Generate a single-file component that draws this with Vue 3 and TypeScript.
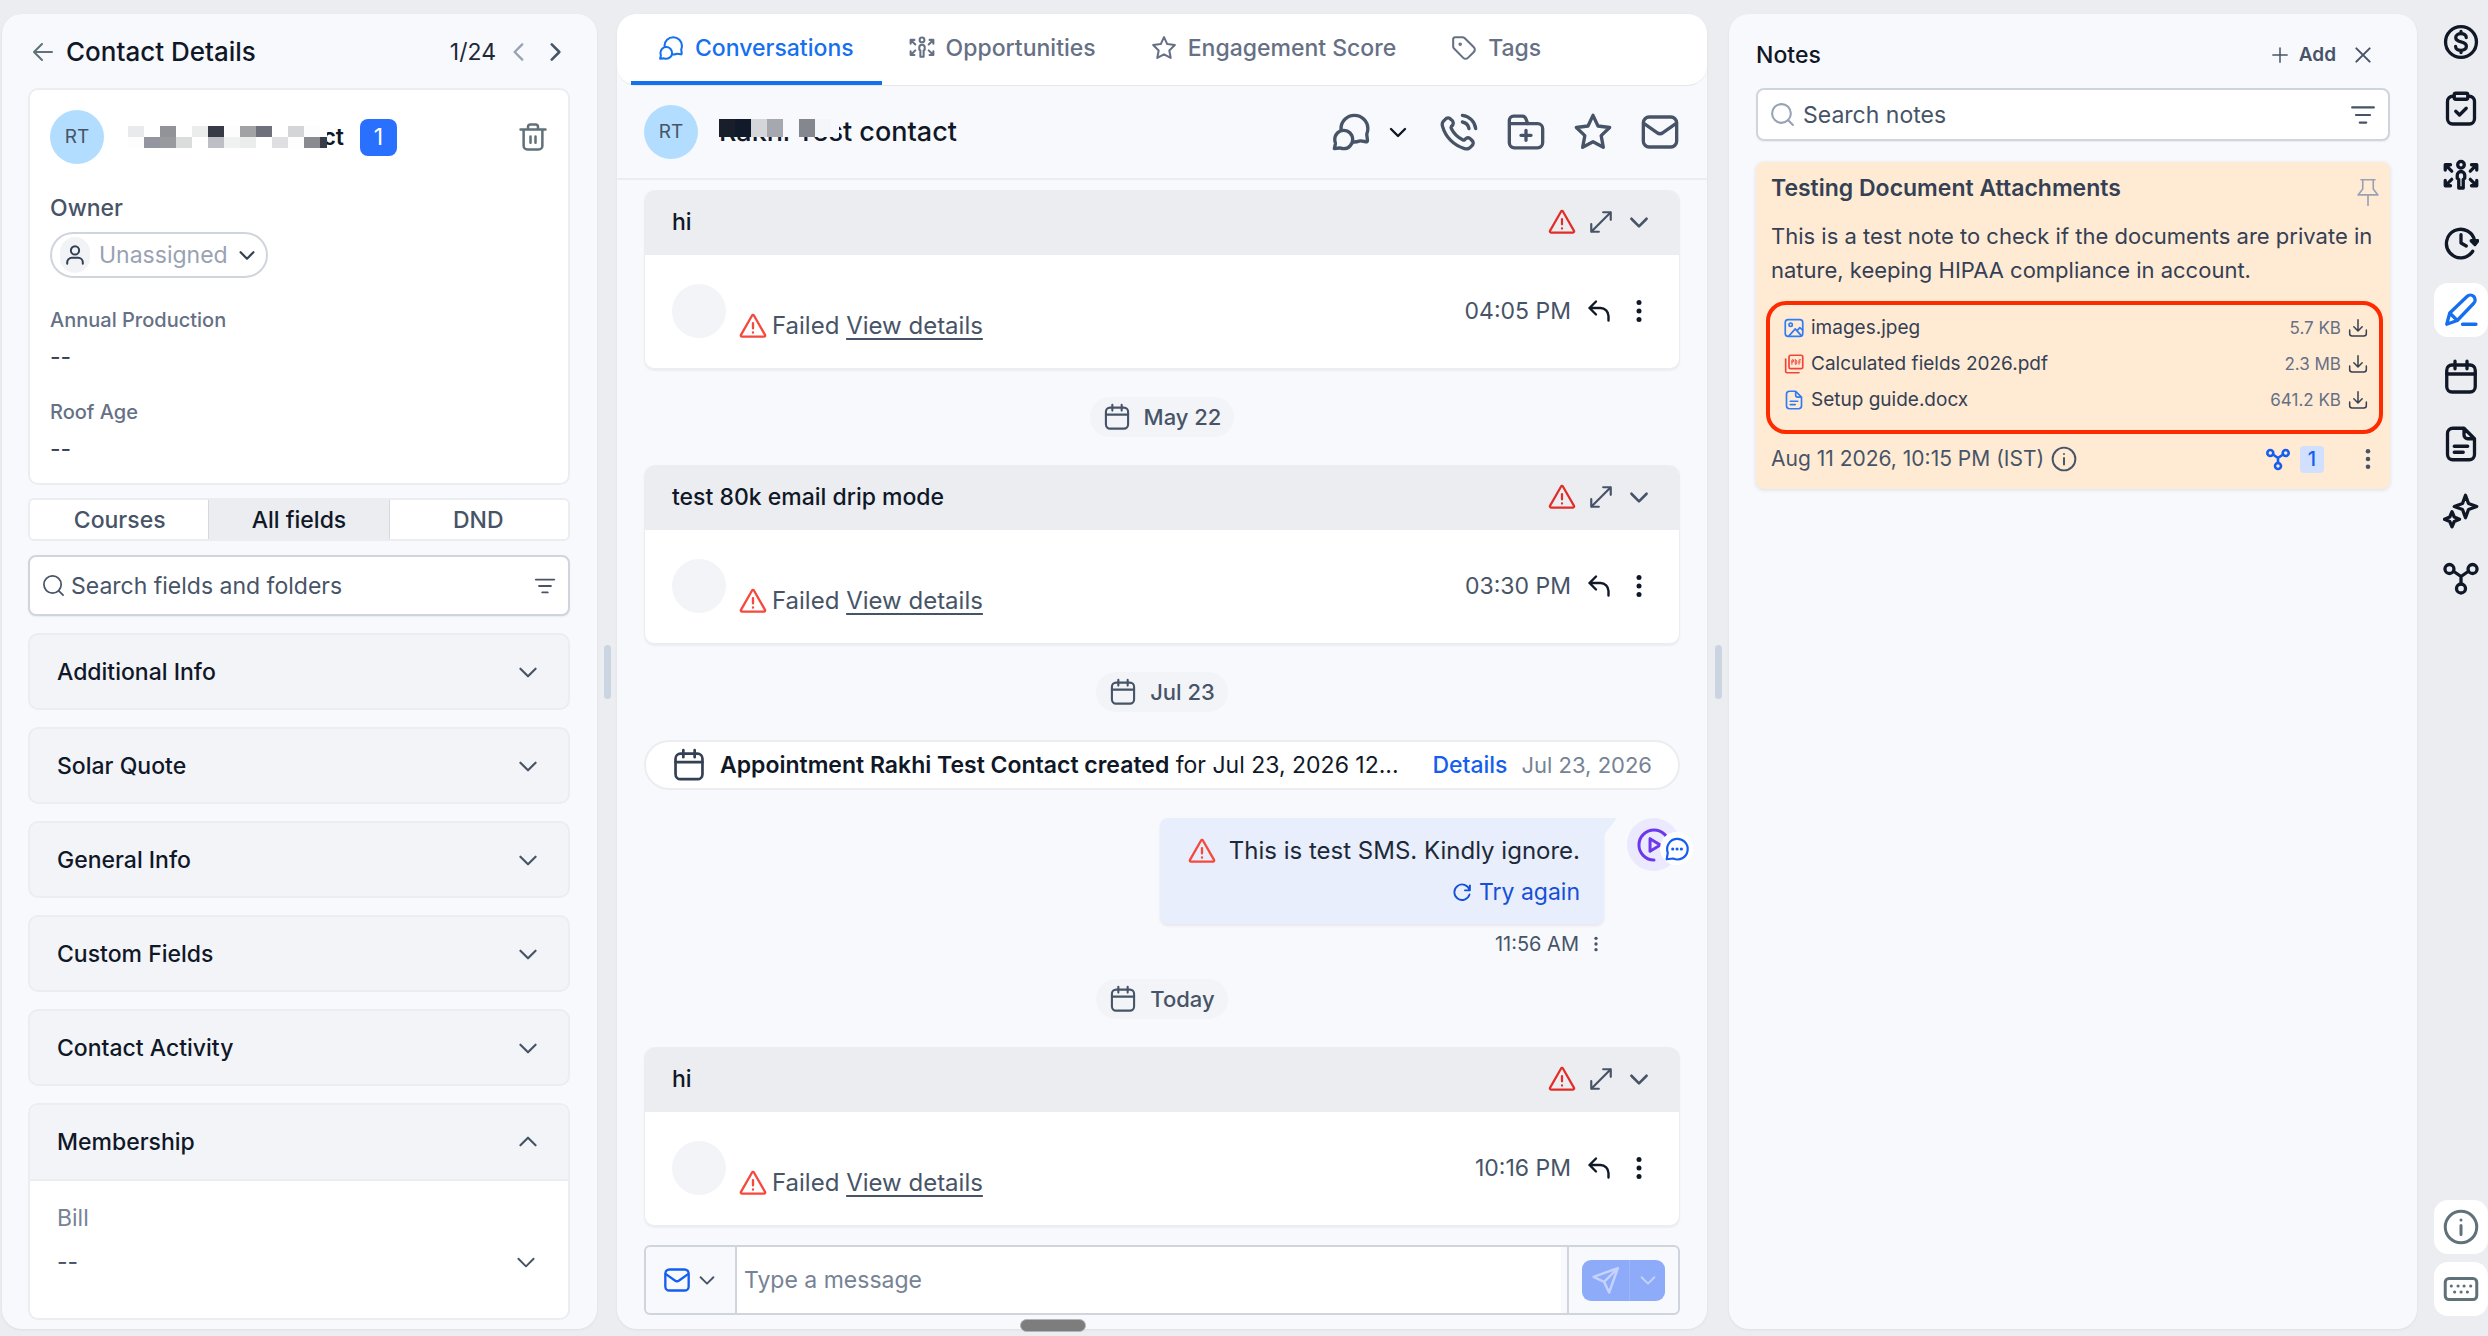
<script setup lang="ts">
import { h, ref } from 'vue'

const icons: Record<string, string> = {
  arrowLeft: '<path d="M21 12H3M11 4l-8 8 8 8"/>',
  chevronLeft: '<path d="M15 5l-7 7 7 7"/>',
  chevronRight: '<path d="M9 5l7 7-7 7"/>',
  chevronDown: '<path d="M5 9l7 7 7-7"/>',
  chevronUp: '<path d="M5 15l7-7 7 7"/>',
  trash: '<path d="M2 6h20M8 5.500V4a2 2 0 0 1 2-2h4a2 2 0 0 1 2 2v1.500M4.500 6v13a3 3 0 0 0 3 3h9a3 3 0 0 0 3-3V6M10 11.500v5M14 11.500v5"/>',
  user: '<circle cx="12" cy="7" r="4.500"/><path d="M3.500 21.500v-1.500a5 5 0 0 1 5-5h7a5 5 0 0 1 5 5v1.500"/>',
  search: '<circle cx="11" cy="11" r="9"/><path d="M17.500 17.500L22 22"/>',
  filter: '<path d="M2 5h20M5.500 12h13M9 19h6"/>',
  chat: '<path d="M6.094 11.229A8 8 0 0 1 6 10c0-4.418 3.605-8 8.053-8 4.447 0 8.052 3.582 8.052 8 0 .998-.184 1.953-.52 2.834-.13.350-.144.480-.116.854l.403 3.270c.06.480.030.800-.251.911-.200.080-.400.020-.659-.022l-3.185-.467c-.350-.050-.500-.020-.884.107A8.100 8.100 0 0 1 12.823 17.907M7.632 22C10.597 22 13 19.538 13 16.500S10.597 11 7.632 11s-5.369 2.462-5.369 5.500c0 .610.097 1.198.277 1.747.130.400.150.500.071.991L2 22l2.995-.409c.350-.040.450-.030.887.110.549.194 1.137.299 1.750.299Z"/>',
  people: '<circle cx="12" cy="4.500" r="2.200"/><path d="M9.500 13.500v-2a2.500 2.500 0 0 1 5 0v2l-1 .8V20h-3v-5.700zM1.500 8V4.500H5M1.800 4.800l4 4M22.500 8V4.500H19M22.200 4.800l-4 4M1.500 15v3.500H5M1.800 18.200l4-4M22.500 15v3.500H19M22.200 18.200l-4-4"/>',
  star: '<path d="M12 2l3 6.400 7 .9-5.100 4.900 1.300 7L12 17.800l-6.200 3.400 1.300-7L2 9.300l7-.9z"/>',
  tag: '<path d="M2 4a2 2 0 0 1 2-2h6.500a3 3 0 0 1 2 .8l8.600 8.500a3 3 0 0 1 0 4.300l-5.500 5.500a3 3 0 0 1-4.300 0l-8.500-8.600a3 3 0 0 1-.8-2z"/><circle cx="8.500" cy="8.500" r=".7"/>',
  phone: '<path d="M14.050 6A5 5 0 0 1 18 9.950M14.050 2A9 9 0 0 1 22 9.940M10.227 13.863a16 16 0 0 1-2.847-4.010c-.150-.300-.180-.900.034-1.128.100-.150.220-.240.220-.240.350-.350.524-.522.639-.698a2 2 0 0 0 0-2.180c-.115-.176-.290-.351-.639-.701l-.195-.195c-.531-.531-.797-.797-1.083-.941a2 2 0 0 0-1.805 0c-.285.144-.551.410-1.083.941l-.157.158c-.530.530-.795.795-.997 1.155-.224.400-.386 1.020-.384 1.478.001.413.081.695.241 1.260a19 19 0 0 0 13.157 13.157c.565.160.847.240 1.260.241.458.002 1.079-.160 1.478-.384.360-.202.625-.467 1.155-.997l.157-.158c.532-.531.798-.797.942-1.082a2 2 0 0 0 0-1.806c-.144-.285-.410-.551-.942-1.082l-.195-.195c-.349-.350-.524-.525-.700-.639a2 2 0 0 0-2.180 0c-.176.114-.351.289-.700.639-.100.110-.170.170-.239.219-.237.170-.582.229-.862.147-.100-.020-.266-.113-.266-.113a16 16 0 0 1-4.010-2.846Z"/>',
  folder: '<path d="M2 7h17a3 3 0 0 1 3 3v8.500a3 3 0 0 1-3 3H5a3 3 0 0 1-3-3V5a2.500 2.500 0 0 1 2.500-2.500h5A2.500 2.500 0 0 1 12 4.200L13 7M12 11v6M9 14h6"/>',
  mail: '<rect x="2" y="3" width="20" height="18" rx="3.500"/><path d="M2.500 7l7.700 5.400a3 3 0 0 0 3.600 0L21.500 7"/>',
  warning: '<path d="M12 2.500a1 1 0 0 1 .8.500l9.500 16.600a1 1 0 0 1-.9 1.500H2.600a1 1 0 0 1-.9-1.500L11.200 3a1 1 0 0 1 .8-.5zM12 9.500v4.500M12 17.400v.2"/>',
  expand: '<path d="M14 3h7v7M10 21H3v-7M21 3L3 21"/>',
  reply: '<path d="M9 2.500L2.500 9 9 15.500M2.500 9h11a8 8 0 0 1 8 8v4.500"/>',
  dots: '<g fill="currentColor" stroke="none"><circle cx="12" cy="3.500" r="2.500"/><circle cx="12" cy="12" r="2.500"/><circle cx="12" cy="20.500" r="2.500"/></g>',
  calendar: '<rect x="2.500" y="4" width="19" height="18" rx="3.500"/><path d="M2.500 10h19M8 1.500v5M16 1.500v5"/>',
  refresh: '<path d="M21.500 4v6h-6M21 9.500A9.300 9.300 0 1 0 21 15"/>',
  play: '<path d="M12 21.500A9.500 9.500 0 1 1 21.500 12M9.500 8v8l6.500-4z"/>',
  sms: '<path d="M3.500 15.500A9.500 9.500 0 1 1 8.500 20.800L2.500 21.500z"/><path d="M8 12h.1M12 12h.1M16 12h.1" stroke-width="2.800"/>',
  send: '<path d="M21.500 2.500L2 9.500l8.500 4 4 8.500zM21.500 2.500l-11 11"/>',
  plus: '<path d="M12 2.500v19M2.500 12h19"/>',
  close: '<path d="M4 4l16 16M20 4L4 20"/>',
  pin: '<path d="M6 1.500h12M7.500 1.500v8L3.500 14.500h17l-4-5v-8M12 14.500V23.500"/>',
  image: '<rect x="1.500" y="2" width="21" height="20" rx="3.500"/><circle cx="8" cy="8" r="2"/><path d="M6 21.500l7.500-8.500 7.500 8.500M15.500 15.500l3.500-4 3.500 3"/>',
  pdf: '<rect x="6" y="1.500" width="16.500" height="16" rx="2"/><path d="M2 6v15a1.500 1.500 0 0 0 1.500 1.500H18"/><path d="M9.500 12.500V7h1.800v2.500H9.500M13.500 7v5.500h.7q1.300 0 1.300-2.700T14.200 7zM18 12.500V7h2M18 9.700h1.500" stroke-width="1.200"/>',
  doc: '<path d="M14 1.500H6.500a3.500 3.500 0 0 0-3.500 3.500v14a3.500 3.500 0 0 0 3.500 3.500h11A3.500 3.500 0 0 0 21 19V8.500zM14 1.500V6a2.500 2.500 0 0 0 2.500 2.500H21M7.500 13.500h9M7.500 17.500h6"/>',
  download: '<path d="M2 14.500v4a3 3 0 0 0 3 3h14a3 3 0 0 0 3-3v-4M12 2v13M7 10.500l5 5 5-5"/>',
  info: '<circle cx="12" cy="12" r="10.500"/><path d="M12 11v6M12 7.300v.1"/>',
  share: '<circle cx="4.300" cy="6" r="3"/><circle cx="19.700" cy="6" r="3"/><circle cx="12" cy="19" r="3"/><path d="M7 7.500l5 3.500 5-3.500M12 11v5"/>',
  dollar: '<circle cx="12" cy="12" r="10.300"/><path d="M15.500 9c0-1.600-1.500-2.600-3.500-2.600S8.500 7.500 8.500 9s1.200 2.400 3.500 2.900 3.600 1.400 3.600 3-1.500 2.700-3.600 2.700S8.400 16.500 8.400 15M12 5v1.400M12 17.600V19"/>',
  clipboard: '<rect x="3" y="3.500" width="18" height="18.500" rx="3.500"/><rect x="7.500" y="1.500" width="9" height="4" rx="1" fill="#ecedf1"/><path d="M8.500 13.500l2.500 2.500 4.500-4.500"/>',
  clock: '<path d="M19.800 17.500a9.500 9.500 0 1 1 1.400-6.500M18.800 10.500l2.500 2.500 2-2.500zM12 6.500V12l3.500 2"/>',
  pen: '<path d="M2.500 21.500L4.500 14 16 3a3 3 0 0 1 4.500 4.500L9.500 19zM4.500 14l5 5M13 21.500h9"/>',
  sparkles: '<path d="M15 1.500l2 5.500 5.500 2-5.500 2-2 5.500-2-5.500-5.500-2L13 7zM6 12.500l1.500 3.500 3.500 1.500L7.500 19 6 22.500 4.500 19 1 17.500 4.500 16z"/>',
  keyboard: '<rect x="1.500" y="5" width="21" height="14" rx="2.500"/><path d="M5.500 10h.1M10 10h.1M14 10h.1M18.400 10h.1M7.700 14h.1M12 14h.1M16.200 14h.1"/>',
}

const Icon = (props: { name: string; size: number; weight?: number }) =>
  h('svg', {
    class: 'icon',
    viewBox: '0 0 24 24',
    width: props.size,
    height: props.size,
    fill: 'none',
    stroke: 'currentColor',
    'stroke-width': props.weight ?? 2,
    'stroke-linecap': 'round',
    'stroke-linejoin': 'round',
    'aria-hidden': 'true',
    innerHTML: icons[props.name],
  })
Icon.props = ['name', 'size', 'weight']

const maskA = [
  ['#e9eaec', '#fff', '#929398', '#fff', '#ebeded', '#383b46', '#fdfdfd', '#a0a2a3', '#6e717c', '#fff', '#d4d5d7', '#fdfdfd', '#fff'],
  ['#fdfdfd', '#9396a0', '#989a9d', '#dbdddc', '#fff', '#bebfc4', '#f0f1f1', '#ebeded', '#fff', '#dfdfe2', '#fefefe', '#8a8b90', '#3a3d48'],
]
const maskB = ['#181e2a', '#111a2b', '#d5d6da', '#a6a8af', '#f8f9fd', '#85878f', '#f5f6fa', '#f8f9fd']

const segments = ['Courses', 'All fields', 'DND']
const activeSegment = ref('All fields')
const folders = ['Additional Info', 'Solar Quote', 'General Info', 'Custom Fields', 'Contact Activity']
const tabs = [
  { label: 'Conversations', icon: 'chat' },
  { label: 'Opportunities', icon: 'people' },
  { label: 'Engagement Score', icon: 'star' },
  { label: 'Tags', icon: 'tag' },
]
const activeTab = ref('Conversations')
type Item =
  | { kind: 'email'; subject: string; time: string }
  | { kind: 'date'; label: string }
  | { kind: 'appointment' }
  | { kind: 'sms' }
const feed: Item[] = [
  { kind: 'email', subject: 'hi', time: '04:05 PM' },
  { kind: 'date', label: 'May 22' },
  { kind: 'email', subject: 'test 80k email drip mode', time: '03:30 PM' },
  { kind: 'date', label: 'Jul 23' },
  { kind: 'appointment' },
  { kind: 'sms' },
  { kind: 'date', label: 'Today' },
  { kind: 'email', subject: 'hi', time: '10:16 PM' },
]
const files = [
  { name: 'images.jpeg', size: '5.7 KB', icon: 'image' },
  { name: 'Calculated fields 2026.pdf', size: '2.3 MB', icon: 'pdf' },
  { name: 'Setup guide.docx', size: '641.2 KB', icon: 'doc' },
]
const rail = ['dollar', 'clipboard', 'people', 'clock', 'pen', 'calendar', 'doc', 'sparkles', 'share']
</script>

<template>
  <div class="app">
    <aside class="panel contact">
      <header class="contact-head">
        <button class="plain muted" aria-label="Back"><Icon name="arrowLeft" :size="24" /></button>
        <h1>Contact Details</h1>
        <span class="count">1/24</span>
        <button class="plain faint" aria-label="Previous"><Icon name="chevronLeft" :size="26" :weight="2.200" /></button>
        <button class="plain" aria-label="Next"><Icon name="chevronRight" :size="26" :weight="2.400" /></button>
      </header>

      <section class="card summary">
        <div class="person">
          <span class="avatar">RT</span>
          <div class="masked-name">
            <div class="mask mask-a" aria-hidden="true">
              <div v-for="(row, r) in maskA" :key="r" class="mask-row">
                <i v-for="(c, i) in row" :key="i" :style="{ background: c }"></i>
              </div>
            </div>
            <strong>ct</strong>
          </div>
          <span class="badge">1</span>
          <button class="plain muted trash" aria-label="Delete contact"><Icon name="trash" :size="30" :weight="2" /></button>
        </div>
        <label class="owner-label" for="owner">Owner</label>
        <div class="owner">
          <span class="owner-icon"><Icon name="user" :size="22" :weight="2.200" /></span>
          <select id="owner"><option>Unassigned</option></select>
          <Icon name="chevronDown" :size="22" :weight="2.400" />
        </div>
        <dl>
          <dt>Annual Production</dt>
          <dd>--</dd>
          <dt>Roof Age</dt>
          <dd>--</dd>
        </dl>
      </section>

      <div class="segments">
        <button v-for="s in segments" :key="s" :class="{ on: s === activeSegment }" @click="activeSegment = s">{{ s }}</button>
      </div>

      <div class="search fields-search">
        <Icon name="search" :size="23" :weight="1.800" />
        <input type="text" aria-label="Search fields and folders" placeholder="Search fields and folders" />
        <button class="plain" aria-label="Filter fields"><Icon name="filter" :size="22" /></button>
      </div>

      <div class="folders">
        <button v-for="f in folders" :key="f" class="folder">{{ f }}<Icon name="chevronDown" :size="26" /></button>
        <section class="open-folder">
          <button class="folder">Membership<Icon name="chevronUp" :size="26" /></button>
          <div class="folder-body">
            <label for="bill">Bill</label>
            <div class="bill">
              <select id="bill"><option>--</option></select>
              <Icon name="chevronDown" :size="26" :weight="1.800" />
            </div>
          </div>
        </section>
      </div>
    </aside>

    <div class="gutter"><span></span></div>

    <main class="panel center">
      <nav class="tabs">
        <button v-for="t in tabs" :key="t.label" :class="{ on: t.label === activeTab }" @click="activeTab = t.label">
          <Icon :name="t.icon" :size="26" :weight="1.900" />{{ t.label }}
        </button>
      </nav>
      <header class="chat-head">
        <span class="avatar">RT</span>
        <div class="masked-title">
          <h2>Rakhi Test contact</h2>
          <div class="mask mask-b" aria-hidden="true">
            <div class="mask-row"><i v-for="(c, i) in maskB" :key="i" :style="{ background: c }"></i></div>
          </div>
        </div>
        <div class="actions">
          <button class="plain" aria-label="Chat"><Icon name="chat" :size="40" /></button>
          <button class="plain ink" aria-label="More channels"><Icon name="chevronDown" :size="24" :weight="2.400" /></button>
          <button class="plain call" aria-label="Call"><Icon name="phone" :size="40" /></button>
          <button class="plain" aria-label="Add to folder"><Icon name="folder" :size="40" /></button>
          <button class="plain" aria-label="Star"><Icon name="star" :size="40" /></button>
          <button class="plain" aria-label="Mail"><Icon name="mail" :size="40" /></button>
        </div>
      </header>

      <div class="feed">
        <template v-for="(m, i) in feed" :key="i">
          <article v-if="m.kind === 'email'" class="email">
            <header>
              <span>{{ m.subject }}</span>
              <Icon class="alert" name="warning" :size="28" :weight="1.900" />
              <button class="plain" aria-label="Expand"><Icon name="expand" :size="26" /></button>
              <button class="plain" aria-label="Collapse"><Icon name="chevronDown" :size="26" :weight="2.400" /></button>
            </header>
            <div class="email-body">
              <span class="blank"></span>
              <p><Icon class="alert light" name="warning" :size="28" /><span>Failed <a href="#">View details</a></span></p>
              <time>{{ m.time }}</time>
              <button class="plain ink" aria-label="Reply"><Icon name="reply" :size="24" :weight="2.400" /></button>
              <button class="plain ink" aria-label="More"><Icon name="dots" :size="24" /></button>
            </div>
          </article>
          <div v-else-if="m.kind === 'date'" class="date"><Icon name="calendar" :size="28" :weight="1.800" />{{ m.label }}</div>
          <div v-else-if="m.kind === 'appointment'" class="appointment">
            <Icon name="calendar" :size="34" :weight="1.900" />
            <p><b>Appointment Rakhi Test Contact created</b> for Jul 23, 2026 12...</p>
            <a href="#">Details</a>
            <time>Jul 23, 2026</time>
          </div>
          <div v-else class="sms">
            <div class="sms-col">
              <div class="bubble">
                <p><Icon class="alert light" name="warning" :size="28" />This is test SMS. Kindly ignore.</p>
                <button class="plain retry"><Icon name="refresh" :size="20" :weight="2.200" />Try again</button>
              </div>
              <div class="sms-meta">11:56 AM<Icon name="dots" :size="16" /></div>
            </div>
            <span class="sender">
              <Icon name="play" :size="38" :weight="1.900" />
              <span class="sender-badge"><Icon name="sms" :size="26" /></span>
            </span>
          </div>
        </template>
      </div>

      <form class="composer" @submit.prevent>
        <button type="button" class="channel" aria-label="Channel"><Icon class="blue" name="mail" :size="28" /><Icon name="chevronDown" :size="22" /></button>
        <input type="text" aria-label="Message" placeholder="Type a message" />
        <div class="send-box">
          <div class="send">
            <button aria-label="Send" disabled><Icon name="send" :size="30" /></button>
            <button aria-label="Send options" disabled><Icon name="chevronDown" :size="22" /></button>
          </div>
        </div>
      </form>
      <span class="scroll-thumb"></span>
    </main>

    <div class="gutter"><span></span></div>

    <aside class="panel notes">
      <header class="notes-head">
        <h2>Notes</h2>
        <button class="plain add"><Icon name="plus" :size="18" />Add</button>
        <button class="plain" aria-label="Close"><Icon name="close" :size="20" :weight="2.400" /></button>
      </header>
      <div class="search notes-search">
        <Icon name="search" :size="25" />
        <input type="text" aria-label="Search notes" placeholder="Search notes" />
        <button class="plain" aria-label="Filter notes"><Icon name="filter" :size="26" /></button>
      </div>
      <article class="note">
        <header>
          <h3>Testing Document Attachments</h3>
          <button class="plain" aria-label="Pin"><Icon name="pin" :size="28" :weight="1.400" /></button>
        </header>
        <p>This is a test note to check if the documents are private in nature, keeping HIPAA compliance in account.</p>
        <ul>
          <li v-for="f in files" :key="f.name">
            <Icon :class="f.icon" :name="f.icon" :size="20" />
            <span>{{ f.name }}</span>
            <small>{{ f.size }}</small>
            <button class="plain" :aria-label="'Download ' + f.name"><Icon name="download" :size="20" :weight="1.800" /></button>
          </li>
        </ul>
        <footer>
          <time>Aug 11 2026, 10:15 PM (IST)</time>
          <Icon name="info" :size="26" :weight="1.800" />
          <span class="links"><Icon name="share" :size="24" :weight="2.600" /><b>1</b></span>
          <button class="plain" aria-label="Note options"><Icon name="dots" :size="22" /></button>
        </footer>
      </article>
    </aside>

    <nav class="rail">
      <button v-for="r in rail" :key="r" :class="{ on: r === 'pen' }" :aria-label="r"><Icon :name="r" :size="36" :weight="2.200" /></button>
      <div class="rail-foot">
        <button class="tile" aria-label="info"><Icon name="info" :size="36" /></button>
        <button class="tile" aria-label="keyboard"><Icon name="keyboard" :size="36" /></button>
      </div>
    </nav>
  </div>
</template>

<style>
body {
  margin: 0;
  background: #ecedf1;
}
</style>

<style scoped>
* {
  box-sizing: border-box;
}
.app {
  display: grid;
  grid-template-columns: minmax(0, 595fr) 20px minmax(0, 1090fr) 22px minmax(0, 688fr) 71px;
  min-height: 100vh;
  padding: 14px 0 7px 2px;
  background: #ecedf1;
  color: #475467;
  font: 400 23px/32px Inter, sans-serif;
}
h1, h2, h3, p, dl, dd, ul {
  margin: 0;
  padding: 0;
}
button, input, select {
  font: inherit;
  color: inherit;
  border: 0;
  margin: 0;
  padding: 0;
  background: none;
}
input, select {
  min-width: 0;
  outline: 0;
  appearance: none;
}
input::placeholder {
  color: inherit;
  opacity: 1;
}
.icon {
  display: block;
  flex: none;
}
.plain {
  display: flex;
  align-items: center;
  flex: none;
}
.ink {
  color: #101828;
}
.muted {
  color: #607179;
}
.faint {
  color: #98a2b3;
}
.alert {
  color: #e22c27;
}
.alert.light {
  color: #f6493d;
}
.panel {
  display: flex;
  flex-direction: column;
  border-radius: 20px;
  background: #f8f9fd;
  box-shadow: 0 1px 3px rgba(16, 24, 40, 0.06);
}
.avatar {
  display: flex;
  align-items: center;
  justify-content: center;
  flex: none;
  width: 54px;
  height: 54px;
  border-radius: 50%;
  background: #b2ddff;
  font-size: 19px;
}
.mask {
  position: absolute;
  left: 0;
}
.mask-row {
  display: flex;
}
.mask i {
  width: 16px;
}

.contact {
  padding: 0 27px 9px 26px;
}
.contact-head {
  display: flex;
  align-items: center;
  height: 74px;
  padding: 2px 2px 0 3px;
}
.contact-head h1 {
  flex: 1;
  margin-left: 11px;
  color: #101828;
  font-size: 26px;
  font-weight: 500;
}
.count {
  margin-right: 10px;
  color: #1d2939;
}
.contact-head .faint {
  margin-right: 10px;
}
.card {
  border: 2px solid #ecedf1;
  border-radius: 10px;
  background: #fff;
}
.summary {
  padding: 20px 20px 18px;
}
.person {
  display: flex;
  align-items: center;
}
.masked-name {
  position: relative;
  margin-left: 24px;
  width: 216px;
  text-align: right;
  color: #101828;
}
.masked-name strong {
  font-weight: 600;
}
.mask-a {
  top: 5px;
}
.mask-a i {
  height: 11px;
}
.mask-a i:last-child {
  width: 7px;
}
.badge {
  margin-left: 16px;
  width: 37px;
  height: 37px;
  border-radius: 8px;
  background: #2970ff;
  color: #fff;
  line-height: 37px;
  text-align: center;
}
.trash {
  margin-left: auto;
}
.owner-label {
  display: block;
  margin: 28px 0 8px;
  font-weight: 500;
}
.owner {
  display: flex;
  align-items: center;
  width: 218px;
  height: 46px;
  padding: 0 8px;
  border: 2px solid #d0d5dd;
  border-radius: 23px;
}
.owner-icon {
  display: flex;
  align-items: center;
  justify-content: center;
  width: 30px;
  height: 36px;
  border-radius: 18px;
  background: #f2f3f7;
  color: #344054;
}
.owner select {
  flex: 1;
  margin-left: 9px;
  color: #98a2b3;
}
.owner > .icon {
  color: #344054;
}
dt {
  margin-top: 26px;
  color: #667085;
  font-size: 20px;
  font-weight: 500;
}
dd {
  margin-top: 5px;
  color: #344054;
}
dd + dt {
  margin-top: 23px;
}
.segments {
  display: flex;
  margin-top: 13px;
  height: 43px;
  border: 2px solid #ecedf1;
  border-radius: 6px;
  background: #fff;
}
.segments button {
  flex: 1;
  font-weight: 500;
}
.segments .on {
  background: #ecedf1;
  color: #101828;
  box-shadow: -1px 0 #d5d8de, 1px 0 #d5d8de;
}
.search {
  display: flex;
  align-items: center;
  border: 2px solid #d0d5dd;
  border-radius: 8px;
  background: #fff;
  box-shadow: 0 1px 2px rgba(16, 24, 40, 0.06);
}
.search input {
  flex: 1;
}
.fields-search {
  margin-top: 14px;
  height: 61px;
  padding: 0 12px;
  gap: 6px;
}
.folders {
  display: flex;
  flex-direction: column;
  gap: 17px;
  margin-top: 17px;
}
.folder {
  display: flex;
  align-items: center;
  justify-content: space-between;
  height: 77px;
  padding: 0 27px 0 27px;
  border: 2px solid #ecedf1;
  border-radius: 10px;
  background: #f3f4f8;
  color: #101828;
  font-weight: 500;
}
.folder .icon {
  color: #475467;
}
.open-folder {
  border: 2px solid #ecedf1;
  border-radius: 10px;
  background: #fff;
  overflow: hidden;
}
.open-folder .folder {
  width: 100%;
  height: 76px;
  border-width: 0 0 2px;
  border-radius: 0;
}
.folder-body {
  padding: 21px 29px 40px 27px;
}
.folder-body label {
  color: #768395;
}
.bill {
  display: flex;
  align-items: center;
  justify-content: space-between;
  margin-top: 12px;
  height: 32px;
}
.bill select {
  flex: 1;
}

.gutter {
  display: flex;
  align-items: center;
  justify-content: center;
}
.gutter span {
  width: 7px;
  height: 54px;
  border-radius: 4px;
  background: #cbd5e1;
}

.center {
  position: relative;
}
.tabs {
  display: flex;
  height: 72px;
  padding: 0 14px;
  border-bottom: 1px solid #e4e7ec;
  border-radius: 20px 20px 20px 20px;
  background: #fff;
}
.tabs button {
  display: flex;
  align-items: center;
  gap: 11px;
  padding: 0 28px 4px 27px;
  color: #667085;
  font-weight: 500;
}
.tabs .on {
  border-bottom: 4px solid #1570ef;
  padding-bottom: 0;
  color: #1570ef;
}
.chat-head {
  display: flex;
  align-items: center;
  height: 94px;
  padding: 0 27px 0 27px;
  border-bottom: 2px solid #ecedf1;
}
.masked-title {
  position: relative;
  flex: 1;
  margin-left: 21px;
}
.masked-title h2 {
  color: #101828;
  font-size: 27px;
  font-weight: 500;
}
.mask-b {
  top: 3px;
}
.mask-b i {
  height: 18px;
}
.mask-b i:last-child {
  width: 8px;
}
.actions {
  display: flex;
  align-items: center;
  gap: 27px;
}
.actions .ink {
  margin-left: -12px;
}
.actions .call {
  margin-left: 2px;
}
.feed {
  display: flex;
  flex: 1;
  flex-direction: column;
  gap: 28px;
  padding: 10px 27px 19px;
}
.email {
  border-radius: 10px;
  border: 1px solid #ecedf1;
  border-top: 0;
  background: #fff;
  box-shadow: 0 2px 2px rgba(16, 24, 40, 0.05);
}
.email header {
  display: flex;
  align-items: center;
  gap: 12px;
  height: 65px;
  padding: 0 27px 2px 27px;
  border-radius: 10px 10px 0 0;
  background: #ecedf1;
}
.email header span {
  flex: 1;
  color: #101828;
  font-weight: 500;
}
.email-body {
  display: flex;
  align-items: center;
  height: 113px;
  padding: 0 28px 2px 27px;
}
.blank {
  width: 54px;
  height: 54px;
  border-radius: 50%;
  background: #f3f4f8;
}
.email-body p {
  display: flex;
  align-items: center;
  gap: 5px;
  flex: 1;
  margin: 30px 0 0 13px;
  font-size: 24px;
}
.email-body a {
  color: inherit;
  text-underline-offset: 4px;
}
.email-body .ink {
  margin-left: 16px;
}
.date {
  display: flex;
  align-items: center;
  align-self: center;
  gap: 13px;
  height: 40px;
  padding: 0 13px 0 13px;
  border-radius: 20px;
  background: #f3f4f8;
  font-size: 22px;
  font-weight: 500;
}
.appointment {
  display: flex;
  align-items: center;
  height: 50px;
  padding: 0 26px 0 26px;
  border: 2px solid #ecedf1;
  border-radius: 25px;
  background: #fff;
}
.appointment .icon {
  color: #344054;
}
.appointment p {
  flex: 1;
  margin-left: 14px;
  white-space: nowrap;
  color: #101828;
}
.appointment b {
  font-weight: 600;
}
.appointment a {
  color: #155eef;
  font-weight: 500;
  text-decoration: none;
}
.appointment time {
  margin-left: 14px;
  color: #768395;
  font-size: 22px;
}
.sms {
  display: flex;
  justify-content: flex-end;
  gap: 23px;
}
.bubble {
  position: relative;
  padding: 17px 24px 16px 28px;
  border-radius: 8px 0 8px 8px;
  background: #e8eefb;
  box-shadow: 0 2px 3px rgba(16, 24, 40, 0.08);
}
.bubble::after {
  content: "";
  position: absolute;
  top: 0;
  left: 100%;
  width: 13px;
  height: 17px;
  background: #e8eefb;
  clip-path: polygon(0 0, 100% 0, 0 100%);
}
.bubble p {
  display: flex;
  align-items: center;
  gap: 13px;
  color: #1d2939;
  font-size: 24px;
}
.retry {
  gap: 7px;
  margin: 9px 0 0 auto;
  color: #1550d8;
}
.sms-meta {
  display: flex;
  align-items: center;
  justify-content: flex-end;
  gap: 9px;
  height: 14px;
  margin-top: 13px;
  font-size: 20px;
  line-height: 14px;
}
.sender {
  position: relative;
  display: flex;
  align-items: center;
  justify-content: center;
  width: 53px;
  height: 53px;
  border-radius: 50%;
  background: #ebe9fe;
  color: #6d38ec;
}
.sender-badge {
  position: absolute;
  right: -13px;
  bottom: 6px;
  display: flex;
  align-items: center;
  justify-content: center;
  width: 33px;
  height: 33px;
  border-radius: 50%;
  background: #fff;
  color: #155eef;
}
.composer {
  display: flex;
  height: 70px;
  margin: 0 27px 14px;
  border: 2px solid #d0d5dd;
  border-radius: 6px;
}
.channel {
  display: flex;
  align-items: center;
  justify-content: center;
  gap: 5px;
  width: 91px;
  border-right: 2px solid #d0d5dd;
}
.blue {
  color: #155eef;
}
.composer input {
  flex: 1;
  padding-left: 7px;
  background: #fff;
  color: #768395;
}
.send-box {
  display: flex;
  align-items: center;
  margin-left: 6px;
  padding: 0 13px;
  border-left: 2px solid #d0d5dd;
}
.send {
  display: flex;
  height: 41px;
  border-radius: 9px;
  background: #8eabf9;
  color: #c4d2fc;
}
.send button {
  display: flex;
  align-items: center;
  justify-content: center;
  width: 35px;
}
.send button:first-child {
  width: 48px;
  border-right: 1px solid #9db7fb;
}
.scroll-thumb {
  position: absolute;
  bottom: -3px;
  left: 37%;
  width: 66px;
  height: 13px;
  border: 1px solid #b4b5b7;
  border-radius: 7px;
  background: #7d7d7e;
}

.notes {
  padding: 0 27px;
}
.notes-head {
  display: flex;
  align-items: center;
  height: 74px;
  padding: 7px 17px 0 0;
}
.notes-head h2 {
  flex: 1;
  color: #101828;
  font-size: 23px;
  font-weight: 500;
}
.add {
  gap: 10px;
  margin-right: 17px;
  font-size: 19px;
  font-weight: 600;
}
.notes-search {
  height: 53px;
  padding: 0 12px;
  gap: 8px;
}
.notes-search > .icon {
  color: #98a2b3;
}
.note {
  margin-top: 21px;
  padding: 10px 15px 14px 15px;
  border-radius: 8px;
  background: #ffebd4;
  box-shadow: 0 1px 4px rgba(16, 24, 40, 0.12);
}
.note header {
  display: flex;
  justify-content: space-between;
}
.note header button {
  color: #98a2b3;
  margin: 6px -7px 0 0;
}
.note h3 {
  color: #344054;
  font-size: 23px;
  font-weight: 600;
}
.note p {
  margin: 13px -8px 0 0;
  color: #344054;
  font-size: 22px;
  line-height: 34px;
}
.note ul {
  margin: 14px -8px 0 -5px;
  padding: 5px 11px 12px 14px;
  border: 4px solid #ff2b00;
  border-radius: 20px;
  list-style: none;
}
.note li {
  display: flex;
  align-items: center;
  height: 36px;
  color: #344054;
  font-size: 19px;
}
.note li span {
  flex: 1;
  margin-left: 7px;
}
.note li small {
  margin-right: 7px;
  color: #667085;
  font-size: 17px;
}
.image, .doc {
  color: #2e7cf6;
}
.pdf {
  color: #f04438;
}
.note footer {
  display: flex;
  align-items: center;
  margin-top: 9px;
  font-size: 21px;
}
.note footer > .icon {
  margin-left: 7px;
}
.links {
  display: flex;
  align-items: center;
  gap: 10px;
  margin-left: auto;
  color: #155eef;
}
.links b {
  width: 24px;
  height: 27px;
  border-radius: 4px;
  background: #d1e0ff;
  font-size: 20px;
  font-weight: 500;
  line-height: 27px;
  text-align: center;
}
.note footer .plain {
  margin: 0 -4px 0 33px;
}

.rail {
  display: flex;
  flex-direction: column;
  align-items: flex-end;
  gap: 13px;
  padding-top: 1px;
  color: #101828;
}
.rail button {
  display: flex;
  align-items: center;
  justify-content: center;
  width: 54px;
  height: 54px;
  border-radius: 14px;
}
.rail .on {
  background: #fff;
  color: #1570ef;
}
.rail .doc {
  color: inherit;
}
.rail-foot {
  display: flex;
  flex-direction: column;
  gap: 8px;
  margin: auto 0 13px;
}
.rail .tile {
  background: #fff;
  color: #607179;
}
</style>
